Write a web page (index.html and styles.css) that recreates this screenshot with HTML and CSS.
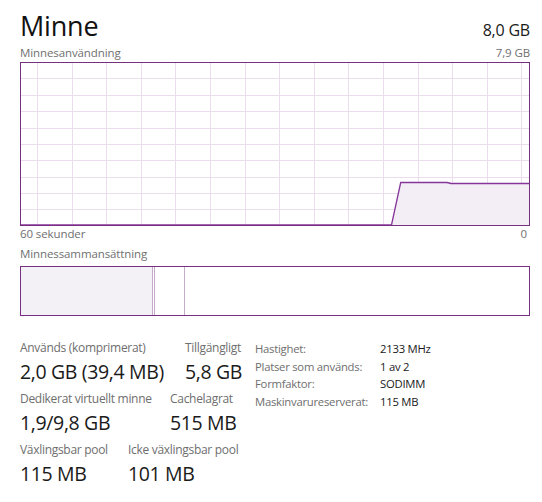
FILE: index.html
```html
<!DOCTYPE html>
<html lang="sv">
<head>
<meta charset="utf-8">
<title>Minne</title>
<link rel="stylesheet" href="styles.css">
</head>
<body>
<div class="page">
  <div class="header">
    <div class="title">Minne</div>
    <div class="total">8,0 GB</div>
  </div>
  <div class="caption-row">
    <span>Minnesanvändning</span>
    <span>7,9 GB</span>
  </div>
  <div class="graph">
    <svg width="510" height="164" viewBox="0 0 510 164" xmlns="http://www.w3.org/2000/svg">
      <g stroke="#ebdcee" stroke-width="1">
        <line x1="17.5" y1="0" x2="17.5" y2="164"/>
        <line x1="52.5" y1="0" x2="52.5" y2="164"/>
        <line x1="86.5" y1="0" x2="86.5" y2="164"/>
        <line x1="121.5" y1="0" x2="121.5" y2="164"/>
        <line x1="155.5" y1="0" x2="155.5" y2="164"/>
        <line x1="190.5" y1="0" x2="190.5" y2="164"/>
        <line x1="225.5" y1="0" x2="225.5" y2="164"/>
        <line x1="259.5" y1="0" x2="259.5" y2="164"/>
        <line x1="294.5" y1="0" x2="294.5" y2="164"/>
        <line x1="328.5" y1="0" x2="328.5" y2="164"/>
        <line x1="363.5" y1="0" x2="363.5" y2="164"/>
        <line x1="398.5" y1="0" x2="398.5" y2="164"/>
        <line x1="432.5" y1="0" x2="432.5" y2="164"/>
        <line x1="467.5" y1="0" x2="467.5" y2="164"/>
        <line x1="501.5" y1="0" x2="501.5" y2="164"/>
        <line x1="0" y1="16.5" x2="510" y2="16.5"/>
        <line x1="0" y1="33.5" x2="510" y2="33.5"/>
        <line x1="0" y1="49.5" x2="510" y2="49.5"/>
        <line x1="0" y1="66.5" x2="510" y2="66.5"/>
        <line x1="0" y1="82.5" x2="510" y2="82.5"/>
        <line x1="0" y1="98.5" x2="510" y2="98.5"/>
        <line x1="0" y1="115.5" x2="510" y2="115.5"/>
        <line x1="0" y1="131.5" x2="510" y2="131.5"/>
        <line x1="0" y1="147.5" x2="510" y2="147.5"/>
      </g>
      <polygon points="371.5,163 380.7,120.5 427,120.5 431,121.5 509,121.5 509,163" fill="#f3eef5"/>
      <polyline points="0,163 371.5,163 380.7,120.5 427,120.5 431,121.5 509,121.5" fill="none" stroke="#86359a" stroke-width="1.3"/>
      <rect x="0.5" y="0.5" width="509" height="163" fill="none" stroke="#76307f" stroke-width="1"/>
    </svg>
  </div>
  <div class="caption-row">
    <span>60 sekunder</span>
    <span class="zero">0</span>
  </div>
  <div class="caption-row comp-caption">
    <span>Minnessammansättning</span>
  </div>
  <div class="composition">
    <div class="seg inuse"></div>
    <div class="seg modified"></div>
    <div class="seg standby"></div>
    <div class="seg free"></div>
  </div>
  <div class="stats">
    <div class="stats-left">
      <div class="stat-row">
        <div class="stat w165">
          <div class="stat-label">Används (komprimerat)</div>
          <div class="stat-value">2,0 GB (39,4 MB)</div>
        </div>
        <div class="stat">
          <div class="stat-label">Tillgängligt</div>
          <div class="stat-value">5,8 GB</div>
        </div>
      </div>
      <div class="stat-row">
        <div class="stat w150">
          <div class="stat-label">Dedikerat virtuellt minne</div>
          <div class="stat-value">1,9/9,8 GB</div>
        </div>
        <div class="stat">
          <div class="stat-label">Cachelagrat</div>
          <div class="stat-value">515 MB</div>
        </div>
      </div>
      <div class="stat-row">
        <div class="stat w108">
          <div class="stat-label">Växlingsbar pool</div>
          <div class="stat-value">115 MB</div>
        </div>
        <div class="stat">
          <div class="stat-label">Icke växlingsbar pool</div>
          <div class="stat-value">101 MB</div>
        </div>
      </div>
    </div>
    <div class="stats-right">
      <div class="info-label">Hastighet:</div><div class="info-value">2133 MHz</div>
      <div class="info-label">Platser som används:</div><div class="info-value">1 av 2</div>
      <div class="info-label">Formfaktor:</div><div class="info-value">SODIMM</div>
      <div class="info-label">Maskinvarureserverat:</div><div class="info-value">115 MB</div>
    </div>
  </div>
</div>
</body>
</html>
```
FILE: styles.css
```css
html, body {
  margin: 0;
  padding: 0;
  background: #ffffff;
}

body {
  font-family: "Open Sans", "Noto Sans", "Liberation Sans", sans-serif;
  color: #1a1a1a;
}

.page {
  width: 510px;
  padding: 8px 12px 0 20px;
}

.header {
  display: flex;
  justify-content: space-between;
  align-items: baseline;
  height: 37px;
}

.title {
  font-size: 27px;
  line-height: 36px;
  color: #111111;
  letter-spacing: -0.2px;
}

.total {
  font-size: 16px;
  line-height: 20px;
  color: #1a1a1a;
  letter-spacing: -0.2px;
}

.caption-row {
  display: flex;
  justify-content: space-between;
  font-size: 11.5px;
  line-height: 16px;
  color: #707070;
  letter-spacing: -0.1px;
}

.caption-row .zero {
  padding-right: 3px;
}

.graph {
  height: 164px;
  margin-top: 1px;
}

.graph svg {
  display: block;
}

.comp-caption {
  margin-top: 4px;
}

.composition {
  display: flex;
  height: 48px;
  margin-top: 4px;
  border: 1px solid #76307f;
}

.seg {
  height: 100%;
}

.inuse {
  width: 131px;
  background: #f3f1f5;
  border-right: 1px solid #c7a9cc;
}

.modified {
  width: 1px;
  background: #ffffff;
  border-right: 1px solid #c7a9cc;
}

.standby {
  width: 29px;
  border-right: 1px solid #c3b0c8;
}

.free {
  flex: 1;
}

.stats {
  display: flex;
  margin-top: 24px;
}

.stats-left {
  width: 235px;
}

.stat-row {
  display: flex;
  margin-bottom: 6px;
}

.stat {
  flex: none;
}

.w165 { width: 165px; }
.w150 { width: 150px; }
.w108 { width: 108px; }

.stat-label {
  font-size: 12px;
  line-height: 16px;
  color: #6e6e6e;
  white-space: nowrap;
  margin-bottom: 3px;
  letter-spacing: -0.3px;
}

.stat-value {
  font-size: 19.5px;
  line-height: 26px;
  color: #1a1a1a;
  white-space: nowrap;
  letter-spacing: -0.35px;
}

.stats-right {
  display: grid;
  grid-template-columns: 125px auto;
  align-content: start;
  font-size: 11.3px;
  line-height: 17.7px;
  letter-spacing: -0.25px;
}

.info-label {
  color: #6e6e6e;
  white-space: nowrap;
}

.info-value {
  color: #1a1a1a;
  white-space: nowrap;
}
```
